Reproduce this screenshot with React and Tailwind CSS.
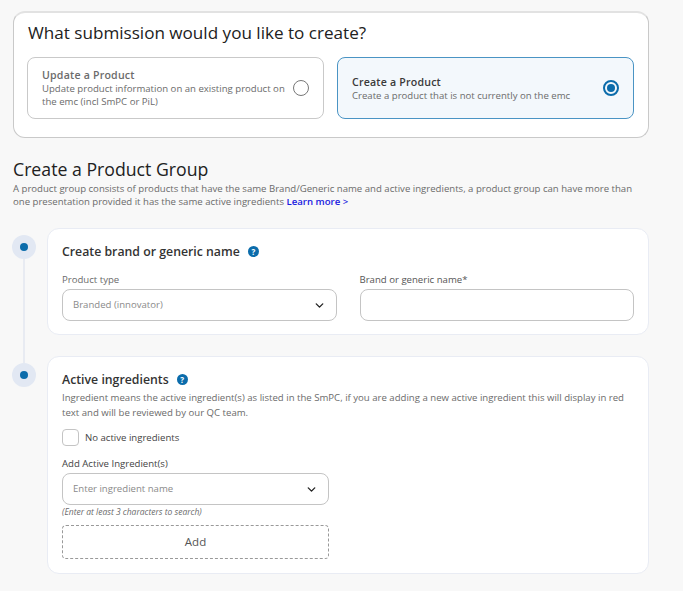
import { ChevronDown } from "lucide-react";

const HelpIcon = () => (
  <span className="flex h-[11px] w-[11px] items-center justify-center rounded-full bg-[#0b6cab] text-[8px] font-bold leading-none text-white">
    ?
  </span>
);

const Option = ({ title, text, selected }) => (
  <div
    className={`flex h-[62px] flex-1 items-center justify-between rounded-lg border pl-[14px] pr-[14px] ${
      selected ? "border-[#4a94c4] bg-[#f3f8fc]" : "border-[#c9c9c9] bg-white"
    }`}
  >
    <div className="w-[247px] pt-px text-[9.6px] leading-[13px] text-[#6b6b6b]">
      <p className={`text-[10.6px] font-semibold leading-[13px] tracking-[0.2px] ${selected ? "text-[#3a3a3a]" : "text-[#6b6b6b]"}`}>
        {title}
      </p>
      <p>{text}</p>
    </div>
    {selected ? (
      <span className="flex h-4 w-4 shrink-0 items-center justify-center rounded-full border-2 border-[#0b6cab]">
        <span className="h-2 w-2 rounded-full bg-[#0b6cab]" />
      </span>
    ) : (
      <span className="h-4 w-4 shrink-0 rounded-full border border-[#777]" />
    )}
  </div>
);

const Step = ({ last, children }) => (
  <div className={`flex ${last ? "" : "pb-[21px]"}`}>
    <div className="flex w-[34px] shrink-0 flex-col items-center pt-[7px] pr-[12px]">
      <span className="flex h-[24px] w-[24px] shrink-0 items-center justify-center rounded-full bg-[#e2e8f3]">
        <span className="h-2 w-2 rounded-full bg-[#0b6cab]" />
      </span>
      {!last && <span className="-mb-[28px] w-[2px] flex-1 bg-[#e8ebf2]" />}
    </div>
    <div className="flex-1 rounded-xl border border-[#e9ecf4] bg-white px-[14px]">{children}</div>
  </div>
);

const App = () => {
  return (
    <div className="h-[591px] overflow-hidden bg-[#f8f8f8] pl-[13px] pt-[11px] font-['Open_Sans',sans-serif]">
      <div className="w-[636px]">
        {/* Submission type */}
        <div className="h-[127px] rounded-xl border border-[#c9c9c9] border-t-2 border-t-[#e2e2e2] bg-white pl-[13px] pr-[14px] pt-[7px]">
          <h2 className="ml-px text-[17.1px] font-medium leading-[26px] text-[#212121]">What submission would you like to create?</h2>
          <div className="mt-[11px] flex gap-[13px]">
            <Option
              title="Update a Product"
              text="Update product information on an existing product on the emc (incl SmPC or PiL)"
            />
            <Option selected title="Create a Product" text="Create a product that is not currently on the emc" />
          </div>
        </div>

        {/* Product group heading */}
        <h1 className="mt-[19px] text-[17.7px] font-medium leading-[25px] text-[#212121]">Create a Product Group</h1>
        <p className="w-[630px] text-[9.6px] leading-[13px] text-[#6b6b6b]">
          A product group consists of products that have the same Brand/Generic name and active ingredients, a product
          group can have more than one presentation provided it has the same active ingredients{" "}
          <a className="font-semibold text-[#1a1ae0]">Learn more &gt;</a>
        </p>

        <div className="mt-[20px]">
          <Step>
            <div className="h-[105px]">
              <div className="flex items-center gap-[8px] pt-[14px]">
                <h3 className="text-[12.3px] font-semibold leading-[17px] text-[#333]">Create brand or generic name</h3>
                <HelpIcon />
              </div>
              <div className="mt-[13px] flex gap-[23px]">
                <div className="flex-1">
                  <label className="block text-[9.6px] leading-[14px] text-[#6b6b6b]">Product type</label>
                  <div className="mt-[2px] flex h-[32px] items-center justify-between rounded-lg border border-[#c4c4c4] pl-[10px] pr-[10px] text-[9.6px] text-[#8a8a8a]">
                    Branded (innovator)
                    <ChevronDown size={13} strokeWidth={2.5} className="text-[#222]" />
                  </div>
                </div>
                <div className="flex-1">
                  <label className="block text-[9.6px] leading-[14px] text-[#555]">Brand or generic name*</label>
                  <input className="mt-[2px] block h-[32px] w-full rounded-lg border border-[#c4c4c4]" />
                </div>
              </div>
            </div>
          </Step>
          <Step last>
            <div className="h-[216px]">
              <div className="flex items-center gap-[8px] pt-[14px]">
                <h3 className="text-[12.3px] font-semibold leading-[17px] text-[#333]">Active ingredients</h3>
                <HelpIcon />
              </div>
              <p className="mt-[2px] text-[9.6px] leading-[15px] text-[#6b6b6b]">
                Ingredient means the active ingredient(s) as listed in the SmPC, if you are adding a new active ingredient
                this will display in red text and will be reviewed by our QC team.
              </p>
              <div className="mt-[9px] flex items-center gap-[6px]">
                <span className="h-[17px] w-[17px] rounded-sm border border-[#c4c4c4]" />
                <span className="pt-px text-[9.6px] text-[#444]">No active ingredients</span>
              </div>
              <label className="mt-[11px] block text-[9.6px] leading-[14px] text-[#444]">Add Active Ingredient(s)</label>
              <div className="mt-[2px] flex h-[32px] w-[267px] items-center justify-between rounded-lg border border-[#c4c4c4] pl-[10px] pr-[10px] text-[9.6px] text-[#8a8a8a]">
                Enter ingredient name
                <ChevronDown size={13} strokeWidth={2.5} className="text-[#222]" />
              </div>
              <p className="text-[8.5px] italic leading-[13px] text-[#6b6b6b]">(Enter at least 3 characters to search)</p>
              <button className="mt-[7px] flex h-[34px] w-[267px] items-center justify-center rounded-sm border border-dashed border-[#999] text-[11.5px] text-[#555]">
                Add
              </button>
            </div>
          </Step>
        </div>
      </div>
    </div>
  );
};

export default App;
